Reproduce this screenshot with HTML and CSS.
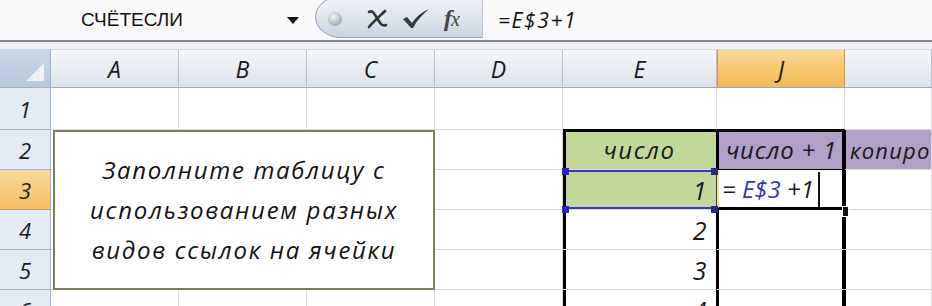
FILE: index.html
```html
<!DOCTYPE html>
<html lang="ru">
<head>
  <meta charset="UTF-8">
  <title>Excel - ссылки</title>
  <link rel="stylesheet" href="styles.css">
</head>
<body>

  <div class="formula-bar">
    <div class="name-box">
      <span class="name">СЧЁТЕСЛИ</span>
      <span class="dropdown"></span>
    </div>
    <div class="fx-buttons">
      <span class="knob"></span>
      <svg class="btn-icon" width="22" height="22" viewBox="0 0 22 22">
        <path d="M3 4 C6 2 8 5 11 10 C14 15 16 19 20 17" fill="none" stroke="#333" stroke-width="2.6" stroke-linecap="round"/>
        <path d="M19 3 C15 7 8 13 3 19" fill="none" stroke="#333" stroke-width="2.6" stroke-linecap="round"/>
      </svg>
      <svg class="btn-icon" width="28" height="24" viewBox="0 0 28 24">
        <path d="M1 12 L5 10 L10 16 C15 9 20 5 27 2 C21 7 15 13 11 21 L9 21 Z" fill="#3a3a3a"/>
      </svg>
      <span class="fx">f<i>x</i></span>
    </div>
    <div class="formula-input">=E$3+1</div>
  </div>
  <div class="bar-gap"></div>

  <div class="sheet">
    <!-- column headers -->
    <div class="corner"><span class="corner-tri"></span></div>
    <div class="ch">A</div>
    <div class="ch">B</div>
    <div class="ch">C</div>
    <div class="ch">D</div>
    <div class="ch">E</div>
    <div class="ch ch-active">J</div>
    <div class="ch"></div>

    <!-- row 1 -->
    <div class="rh">1</div>
    <div class="c"></div>
    <div class="c"></div>
    <div class="c"></div>
    <div class="c"></div>
    <div class="c above"></div>
    <div class="c above"></div>
    <div class="c"></div>

    <!-- row 2 -->
    <div class="rh">2</div>
    <div class="c"></div>
    <div class="c"></div>
    <div class="c"></div>
    <div class="c"></div>
    <div class="c e e-head">число</div>
    <div class="c j j-head">число + 1</div>
    <div class="c k k-head">копиро</div>

    <!-- row 3 -->
    <div class="rh rh-active">3</div>
    <div class="c"></div>
    <div class="c"></div>
    <div class="c"></div>
    <div class="c"></div>
    <div class="c e e-ref num">1</div>
    <div class="c j j-edit">
      <span class="edit-text">= <span class="ref">E$3</span> +1</span>
      <span class="edit-end"></span>
    </div>
    <div class="c k"></div>

    <!-- row 4 -->
    <div class="rh">4</div>
    <div class="c"></div>
    <div class="c"></div>
    <div class="c"></div>
    <div class="c"></div>
    <div class="c e num">2</div>
    <div class="c j"></div>
    <div class="c k"></div>

    <!-- row 5 -->
    <div class="rh">5</div>
    <div class="c"></div>
    <div class="c"></div>
    <div class="c"></div>
    <div class="c"></div>
    <div class="c e num">3</div>
    <div class="c j"></div>
    <div class="c k"></div>

    <!-- row 6 -->
    <div class="rh">6</div>
    <div class="c"></div>
    <div class="c"></div>
    <div class="c"></div>
    <div class="c"></div>
    <div class="c e num">4</div>
    <div class="c j"></div>
    <div class="c k"></div>

    <!-- floating text box -->
    <div class="note">
      Заполните таблицу с<br>
      использованием разных<br>
      видов ссылок на ячейки
    </div>

    <!-- selection handles on E3 -->
    <span class="handle h-tl"></span>
    <span class="handle h-tr"></span>
    <span class="handle h-bl"></span>
    <span class="handle h-br"></span>
    <span class="fill-handle"></span>
  </div>

</body>
</html>
```

FILE: styles.css
```css
body {
  margin: 0;
  width: 932px;
  height: 306px;
  overflow: hidden;
  background-color: #fff;
  font-family: 'Open Sans', 'DejaVu Sans', sans-serif;
}

/* formula bar */
.formula-bar {
  display: flex;
  height: 40px;
  background-color: #f9f9fa;
  border-bottom: 2px solid #7f8791;
}

.name-box {
  width: 315px;
  display: flex;
  align-items: center;
  box-sizing: border-box;
  padding-left: 81px;
}

.name {
  font-family: 'Liberation Sans', Arial, sans-serif;
  font-size: 19px;
  color: #111;
}

.dropdown {
  margin-left: 104px;
  width: 0;
  height: 0;
  border-left: 6px solid transparent;
  border-right: 6px solid transparent;
  border-top: 7px solid #111;
}

.fx-buttons {
  width: 168px;
  display: flex;
  align-items: center;
  box-sizing: border-box;
  margin-top: -4px;
  height: 42px;
  padding-left: 12px;
  border: 1px solid #99a4b4;
  border-right-color: #b9c2cf;
  border-radius: 26px 0 0 26px / 21px 0 0 21px;
  background: linear-gradient(#f3f6fa, #dde4ee 55%, #c8d2df);
}

.knob {
  width: 14px;
  height: 14px;
  border-radius: 50%;
  background: radial-gradient(circle at 40% 35%, #f4f4f4, #a9aeb5 70%, #8d939b);
  margin-top: 4px;
}

.btn-icon {
  margin-left: 24px;
  margin-top: 4px;
}

.btn-icon + .btn-icon {
  margin-left: 14px;
}

.fx {
  margin-left: 14px;
  margin-top: 2px;
  font-family: 'Liberation Serif', 'DejaVu Serif', serif;
  font-style: italic;
  font-weight: bold;
  font-size: 24px;
  color: #444;
}

.fx i {
  font-size: 20px;
  font-weight: normal;
  margin-left: -1px;
}

.formula-input {
  flex: 1;
  padding-left: 15px;
  display: flex;
  align-items: center;
  font-size: 21px;
  letter-spacing: 1.6px;
  font-style: italic;
  color: #111;
}

.bar-gap {
  height: 7px;
  background-color: #eef0f3;
}

/* sheet grid */
.sheet {
  position: relative;
  display: grid;
  grid-template-columns: 51px 128px 128px 128px 128px 154px 128px 87px;
  grid-template-rows: 39px 42px 40px 40px 40px 40px 40px;
  font-style: italic;
  color: #1a1a1a;
}

.corner {
  position: relative;
  background: linear-gradient(#c9d6e8, #b8c8de);
  border-right: 1px solid #9eb2cd;
  border-bottom: 1px solid #9eb2cd;
}

.corner-tri {
  position: absolute;
  right: 6px;
  bottom: 6px;
  width: 0;
  height: 0;
  border-left: 18px solid transparent;
  border-bottom: 18px solid #eef2f8;
}

.ch {
  display: flex;
  align-items: center;
  justify-content: center;
  font-size: 23px;
  background: linear-gradient(#f5f7fa, #e9edf2 50%, #dde2e9);
  border-right: 1px solid #b7c0cc;
  border-bottom: 1px solid #9ea8b5;
  border-top: 1px solid #d3d9e1;
}

.ch-active {
  background: linear-gradient(#f9d99a, #f6c86f 50%, #f1b95a);
  border-right-color: #c49a52;
  border-left: 1px solid #c49a52;
}

.rh {
  display: flex;
  align-items: center;
  justify-content: center;
  font-size: 22px;
  background-color: #e4ebf5;
  border-right: 1px solid #9eb2cd;
  border-bottom: 1px solid #9eb2cd;
}

.rh-active {
  background: linear-gradient(#f9d99a, #f3bf62);
  border-bottom-color: #c49a52;
}

.c {
  box-sizing: border-box;
  border-right: 1px solid #d8dadc;
  border-bottom: 1px solid #d8dadc;
  display: flex;
  align-items: center;
  font-size: 24px;
  letter-spacing: 1.5px;
  white-space: nowrap;
  overflow: hidden;
}

.above {
  border-bottom-color: #000;
}

.e {
  box-shadow: inset 3px 0 #000;
  border-right-color: #000;
}

.j {
  box-shadow: inset 2px 0 #000, inset -2px 0 #000;
  border-right-color: #000;
}

.k {
  box-shadow: inset 1px 0 #000;
}

.num {
  justify-content: flex-end;
  padding-right: 8px;
  font-size: 25px;
}

.e-head {
  justify-content: center;
  background-color: #c4d79b;
  box-shadow: inset 3px 0 #000, inset 0 2px #000;
}

.j-head {
  justify-content: center;
  padding-left: 2px;
  background-color: #b1a0c7;
  letter-spacing: 0.8px;
  box-shadow: inset 2px 0 #000, inset -2px 0 #000, inset 0 2px #000;
  border-bottom-color: #000;
}

.k-head {
  background-color: #b1a0c7;
  padding-left: 5px;
  font-size: 22px;
  letter-spacing: 1.2px;
}

.e-ref {
  background-color: #c3d69b;
  border-right-color: #2f2fb8;
  box-shadow: inset 3px 0 #000, inset 0 2px #3535c8, inset 0 -2px #3535c8;
}

.j-edit {
  position: relative;
  background-color: #fff;
  border-left: 2px solid #f2ec5e;
  border-bottom: 3px solid #000;
  box-shadow: inset -2px 0 #000;
  padding-left: 3px;
}

.edit-text {
  letter-spacing: 0;
}

.ref {
  color: #3434c4;
}

.edit-end {
  position: absolute;
  left: 99px;
  top: 2px;
  bottom: 0;
  width: 2px;
  background-color: #111;
}

/* floating text box over A2:C5 */
.note {
  position: absolute;
  left: 53px;
  top: 81px;
  width: 382px;
  height: 160px;
  box-sizing: border-box;
  border: 2px solid #7d7d5e;
  background-color: #fff;
  display: flex;
  align-items: center;
  justify-content: center;
  text-align: center;
  font-size: 24px;
  line-height: 40px;
  letter-spacing: 1.7px;
  color: #141414;
}

.handle {
  position: absolute;
  width: 7px;
  height: 7px;
  background-color: #2626cc;
}

.h-tl { left: 562px; top: 119px; }
.h-tr { left: 711px; top: 119px; background-color: #27278a; }
.h-bl { left: 562px; top: 157px; }
.h-br { left: 711px; top: 157px; background-color: #27278a; }

.fill-handle {
  position: absolute;
  left: 842px;
  top: 157px;
  width: 5px;
  height: 9px;
  border: 1px solid #fff;
  background-color: #111;
}
```
